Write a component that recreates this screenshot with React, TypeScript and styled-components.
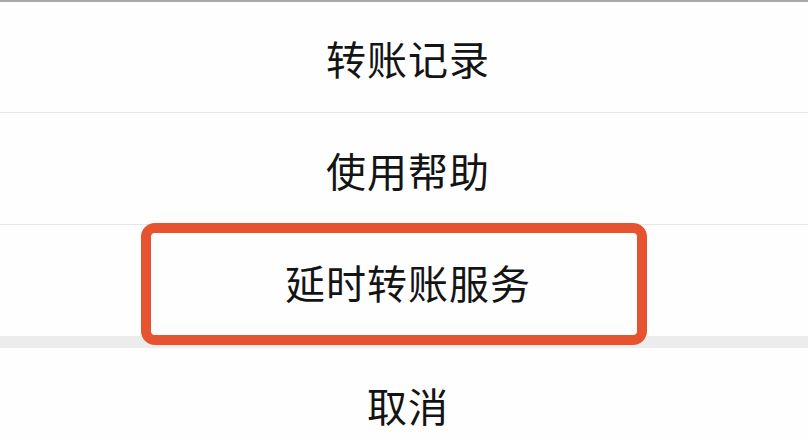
import React from "react";
import styled, { createGlobalStyle } from "styled-components";

const GlobalStyle = createGlobalStyle`
  html, body {
    margin: 0;
    padding: 0;
    background: #ffffff;
    overflow: hidden;
  }
  body {
    font-family: "Noto Sans CJK SC", "Noto Sans", sans-serif;
  }
`;

const items = ["转账记录", "使用帮助", "延时转账服务"];

function App() {
  return (
    <>
      <GlobalStyle />
      <Style.Sheet>
        <Style.TopLine />
        {items.map((label, index) => (
          <Style.Row key={index} first={index === 0}>
            <Style.Label>{label}</Style.Label>
          </Style.Row>
        ))}
        <Style.Gap />
        <Style.Row last>
          <Style.Label>取消</Style.Label>
        </Style.Row>
        <Style.Highlight />
      </Style.Sheet>
    </>
  );
}

export default App;

const Style = {
  Sheet: styled.div`
    position: relative;
    width: 808px;
    height: 440px;
    display: flex;
    flex-direction: column;
    background: #ffffff;
    overflow: hidden;
  `,
  TopLine: styled.div`
    height: 2px;
    background: #a9a9a9;
    flex: none;
  `,
  Row: styled.div<{ first?: boolean; last?: boolean }>`
    flex: none;
    height: ${(p) => (p.first ? "110px" : "111px")};
    display: flex;
    align-items: center;
    justify-content: center;
    padding-left: 8px;
    background: #fefefe;
    border-bottom: ${(p) => (p.last ? "none" : "1px solid #e6e6e6")};
  `,
  Label: styled.span`
    font-size: 40px;
    color: #141414;
    letter-spacing: 1px;
    line-height: 1;
    padding-top: 2px;
  `,
  Gap: styled.div`
    flex: none;
    height: 12px;
    margin-top: -1px;
    background: #ececec;
  `,
  Highlight: styled.div`
    position: absolute;
    left: 141px;
    top: 223px;
    width: 486px;
    height: 102px;
    border: 10px solid #e6542f;
    border-radius: 14px;
    pointer-events: none;
  `,
};
